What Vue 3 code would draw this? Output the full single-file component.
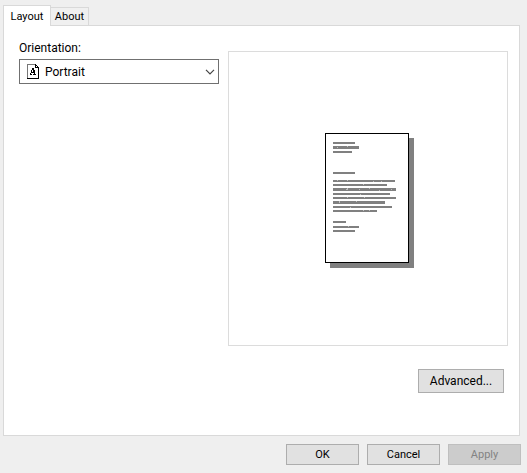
<script setup>
import { ref } from 'vue'

const tabs = ['Layout', 'About']
const activeTab = ref('Layout')
const orientation = ref('Portrait')

// Text lines of the sample page: [top, width, height]
const lines = [
  [9, 22, 2], [13, 26, 3], [18, 19, 2], [39, 22, 2],
  [47, 62, 2], [51, 54, 2], [55, 63, 3], [60, 57, 2],
  [64, 63, 2], [68, 52, 3], [73, 59, 2], [77, 44, 2],
  [88, 13, 2], [93, 26, 2], [97, 22, 2]
]

// Light word breaks inside the lines: [x, y]
const breaks = [
  [12, 14], [22, 13], [12, 47], [22, 47], [48, 48], [56, 48],
  [38, 51], [21, 56], [22, 55], [22, 56], [34, 56], [44, 55],
  [54, 57], [66, 56], [35, 61], [22, 64], [39, 64], [14, 68],
  [14, 69], [31, 68], [25, 74], [38, 77], [44, 77], [23, 93]
]
</script>

<template>
  <main class="dialog">
    <div class="tabs" role="tablist">
      <button
        v-for="tab in tabs"
        :key="tab"
        type="button"
        role="tab"
        class="tab"
        :class="{ active: tab === activeTab }"
        :aria-selected="tab === activeTab"
        @click="activeTab = tab"
      >{{ tab }}</button>
    </div>

    <section class="panel" role="tabpanel">
      <div class="columns">
        <div class="settings">
          <label class="label" for="orientation">Orientation:</label>
          <div class="combo">
            <select id="orientation" v-model="orientation" class="select">
              <option>Portrait</option>
              <option>Landscape</option>
            </select>
            <svg class="sheet" width="13" height="15" viewBox="0 0 13 15" shape-rendering="crispEdges" aria-hidden="true">
              <path d="M0 0H9V1H10V2H11V3H12V15H0Z" fill="#000" />
              <path d="M1 1H8V4H11V14H1Z" fill="#fff" />
              <path d="M0 0H8V1H1V14H0Z" fill="#777" />
              <path d="M9 2H10V3H9Z" fill="#fff" />
              <path d="M5 4H7V5H5ZM5 5H7V6H5ZM4 6H5V8H4ZM6 6H8V8H6ZM4 8H8V9H4ZM3 9H4V10H3ZM7 9H8V10H7ZM3 10H5V11H3ZM6 10H9V11H6Z" fill="#000" />
            </svg>
            <svg class="chevron" width="10" height="6" viewBox="0 0 10 6" aria-hidden="true">
              <path d="M1 0.8L5 4.8L9 0.8" fill="none" stroke="#444" stroke-width="1.2" />
            </svg>
          </div>
        </div>

        <div class="preview">
          <svg width="89" height="135" viewBox="0 0 89 135" shape-rendering="crispEdges" role="img" aria-label="Page preview">
            <rect x="5" y="5" width="84" height="130" fill="#808080" />
            <rect width="84" height="130" fill="#000" />
            <rect x="1" y="1" width="82" height="128" fill="#fff" />
            <rect v-for="line in lines" :key="line[0]" x="8" :y="line[0]" :width="line[1]" :height="line[2]" fill="#808080" />
            <rect v-for="(spot, i) in breaks" :key="i" :x="spot[0]" :y="spot[1]" width="1" height="1" fill="#c0c0c0" />
          </svg>
        </div>
      </div>

      <div class="more">
        <button type="button" class="button advanced">Advanced...</button>
      </div>
    </section>

    <footer class="actions">
      <button type="button" class="button">OK</button>
      <button type="button" class="button">Cancel</button>
      <button type="button" class="button" disabled>Apply</button>
    </footer>
  </main>
</template>

<style>
body {
  background: #efefef;
}
</style>

<style scoped>
.dialog {
  box-sizing: border-box;
  min-height: 100vh;
  padding: 5px 6px 8px 3px;
  display: flex;
  flex-direction: column;
  background: #efefef;
  color: #000;
  font-family: Roboto, "Open Sans", sans-serif;
  font-size: 12px;
}

.tabs {
  display: flex;
  align-items: flex-end;
  height: 21px;
}

.tab {
  box-sizing: border-box;
  height: 19px;
  width: 39px;
  margin: 0 0 0 -1px;
  padding: 0;
  border: 1px solid #d9d9d9;
  background: #f0f0f0;
  color: #000;
  font-family: inherit;
  font-size: 11px;
  line-height: 17px;
}

.tab.active {
  position: relative;
  width: 48px;
  height: 21px;
  margin-left: 0;
  border-bottom: 0;
  background: #fff;
}

.panel {
  flex: 1;
  margin: -1px 1px 8px 0;
  padding: 25px 11px 42px 15px;
  border: 1px solid #d9d9d9;
  background: #fff;
  display: flex;
  flex-direction: column;
}

.columns {
  flex: 1;
  display: grid;
  grid-template-columns: 5fr 7fr;
  gap: 9px;
}

.settings {
  display: flex;
  flex-direction: column;
  gap: 2px;
}

.label {
  margin-top: -12px;
  line-height: 18px;
}

.combo {
  display: grid;
  align-items: center;
}

.combo > * {
  grid-area: 1 / 1;
}

.select {
  box-sizing: border-box;
  width: 100%;
  height: 25px;
  padding: 0 24px 0 25px;
  border: 1px solid #707070;
  border-radius: 0;
  appearance: none;
  background: #fff;
  color: #000;
  font: inherit;
}

.sheet {
  margin-left: 8px;
  pointer-events: none;
}

.chevron {
  justify-self: end;
  margin-right: 4px;
  pointer-events: none;
}

.preview {
  display: flex;
  align-items: center;
  justify-content: center;
  padding: 4px 0 0 2px;
  border: 1px solid #dcdcdc;
}

.more {
  display: flex;
  justify-content: flex-end;
  margin-top: 23px;
  padding-right: 4px;
}

.actions {
  display: flex;
  justify-content: flex-end;
  gap: 8px;
}

.button {
  box-sizing: border-box;
  width: 73px;
  height: 21px;
  padding: 0;
  border: 1px solid #adadad;
  background: #e1e1e1;
  color: #000;
  font-family: inherit;
  font-size: 11px;
}

.button.advanced {
  width: 86px;
  height: 24px;
  font-size: 12px;
}

.button:disabled {
  border-color: #bfbfbf;
  background: #ccc;
  color: #838383;
}
</style>
